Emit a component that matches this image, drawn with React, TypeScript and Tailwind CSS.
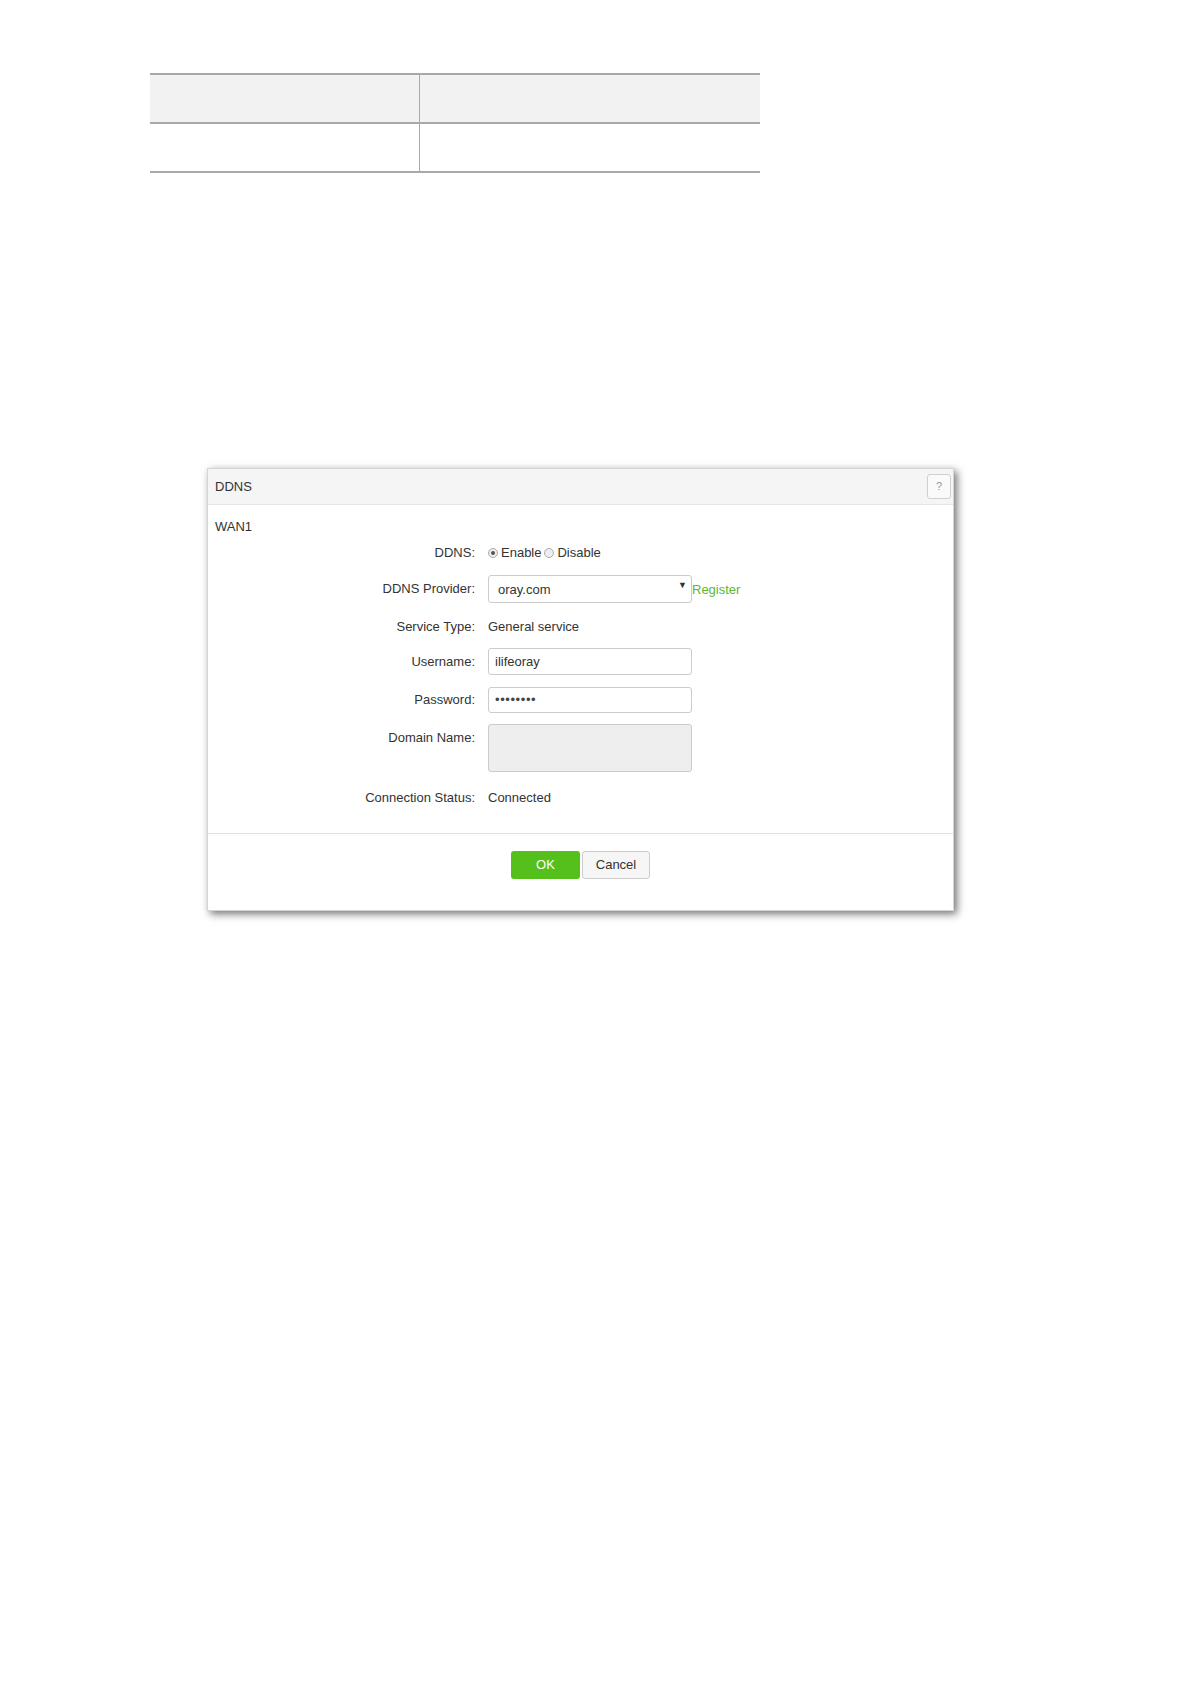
import React from 'react';

const font = { fontFamily: '"Liberation Sans", Arial, sans-serif' };

function Label({ children, top = false }: { children: React.ReactNode; top?: boolean }) {
  return (
    <div className={`w-[280px] shrink-0 pr-[13px] text-right ${top ? 'self-start pt-[4px]' : ''}`}>{children}</div>
  );
}

function Radio({ checked }: { checked?: boolean }) {
  return (
    <span className="inline-flex h-[10px] w-[10px] items-center justify-center rounded-full border border-[#aaa] bg-[#eee]">
      {checked && <span className="h-[4px] w-[4px] rounded-full bg-[#555]" />}
    </span>
  );
}

export default function App() {
  return (
    <div className="min-h-[1684px] bg-white pt-[73px] text-[13px] text-[#333]" style={font}>
      <div className="ml-[150px] w-[610px] border-y-2 border-[#a9a9a9]">
        <div className="flex h-[49px] border-b-2 border-[#a9a9a9] bg-[#f2f2f2]">
          <div className="w-[270px] border-r border-[#a9a9a9]" />
          <div className="flex-1" />
        </div>
        <div className="flex h-[47px]">
          <div className="w-[270px] border-r border-[#a9a9a9]" />
          <div className="flex-1" />
        </div>
      </div>

      <div className="ml-[207px] mt-[295px] flex h-[443px] w-[747px] flex-col border border-[#d4d4d4] bg-white shadow-[3px_3px_8px_rgba(0,0,0,0.55)]">
        <div className="flex h-[36px] items-center justify-between border-b border-[#e6e6e6] bg-[#f5f5f5] pl-[7px] pr-[2px]">
          <span className="text-[13px] text-[#333]">DDNS</span>
          <button className="flex h-[25px] w-[24px] items-center justify-center rounded-[3px] border border-[#d0d0d0] bg-[#fafafa] text-[11px] text-[#999]">
            ?
          </button>
        </div>

        <div className="mt-[14px] h-[16px] pl-[7px] leading-[16px]">WAN1</div>

        <div className="mt-[8px] flex h-[20px] items-center">
          <Label>DDNS:</Label>
          <div className="flex items-center gap-[3px]">
            <Radio checked />
            <span>Enable</span>
            <Radio />
            <span>Disable</span>
          </div>
        </div>

        <div className="mt-[12px] flex h-[28px] items-center">
          <Label>DDNS Provider:</Label>
          <div className="relative flex h-[28px] w-[204px] items-center rounded-[3px] border border-[#ccc] pl-[9px] pt-[2px]">
            oray.com
            <span className="absolute right-[4px] top-[3px] text-[9px] text-[#333]">▼</span>
          </div>
          <span className="pt-[2px] text-[#5cb82c]">Register</span>
        </div>

        <div className="mt-[14px] flex h-[20px] items-center">
          <Label>Service Type:</Label>
          <span>General service</span>
        </div>

        <div className="mt-[11px] flex h-[27px] items-center">
          <Label>Username:</Label>
          <div className="flex h-[27px] w-[204px] items-center rounded-[3px] border border-[#ccc] pl-[6px]">ilifeoray</div>
        </div>

        <div className="mt-[12px] flex h-[26px] items-center">
          <Label>Password:</Label>
          <div className="flex h-[26px] w-[204px] items-center rounded-[3px] border border-[#ccc] pl-[6px] text-[13px] tracking-[0.6px] text-[#444]">
            ••••••••
          </div>
        </div>

        <div className="mt-[11px] flex h-[48px] items-start">
          <Label top>Domain Name:</Label>
          <div className="h-[48px] w-[204px] rounded-[3px] border border-[#ccc] bg-[#eeeeee]" />
        </div>

        <div className="mt-[16px] flex h-[20px] items-center">
          <Label>Connection Status:</Label>
          <span>Connected</span>
        </div>

        <div className="mt-[25px] flex flex-1 justify-center gap-[2px] border-t border-[#e2e2e2] pt-[17px]">
          <button className="h-[28px] w-[69px] rounded-[3px] bg-[#55bf1b] text-[13px] text-white">OK</button>
          <button className="h-[28px] w-[68px] rounded-[3px] border border-[#ccc] bg-[#f6f6f6] text-[13px] text-[#333]">
            Cancel
          </button>
        </div>
      </div>
    </div>
  );
}
